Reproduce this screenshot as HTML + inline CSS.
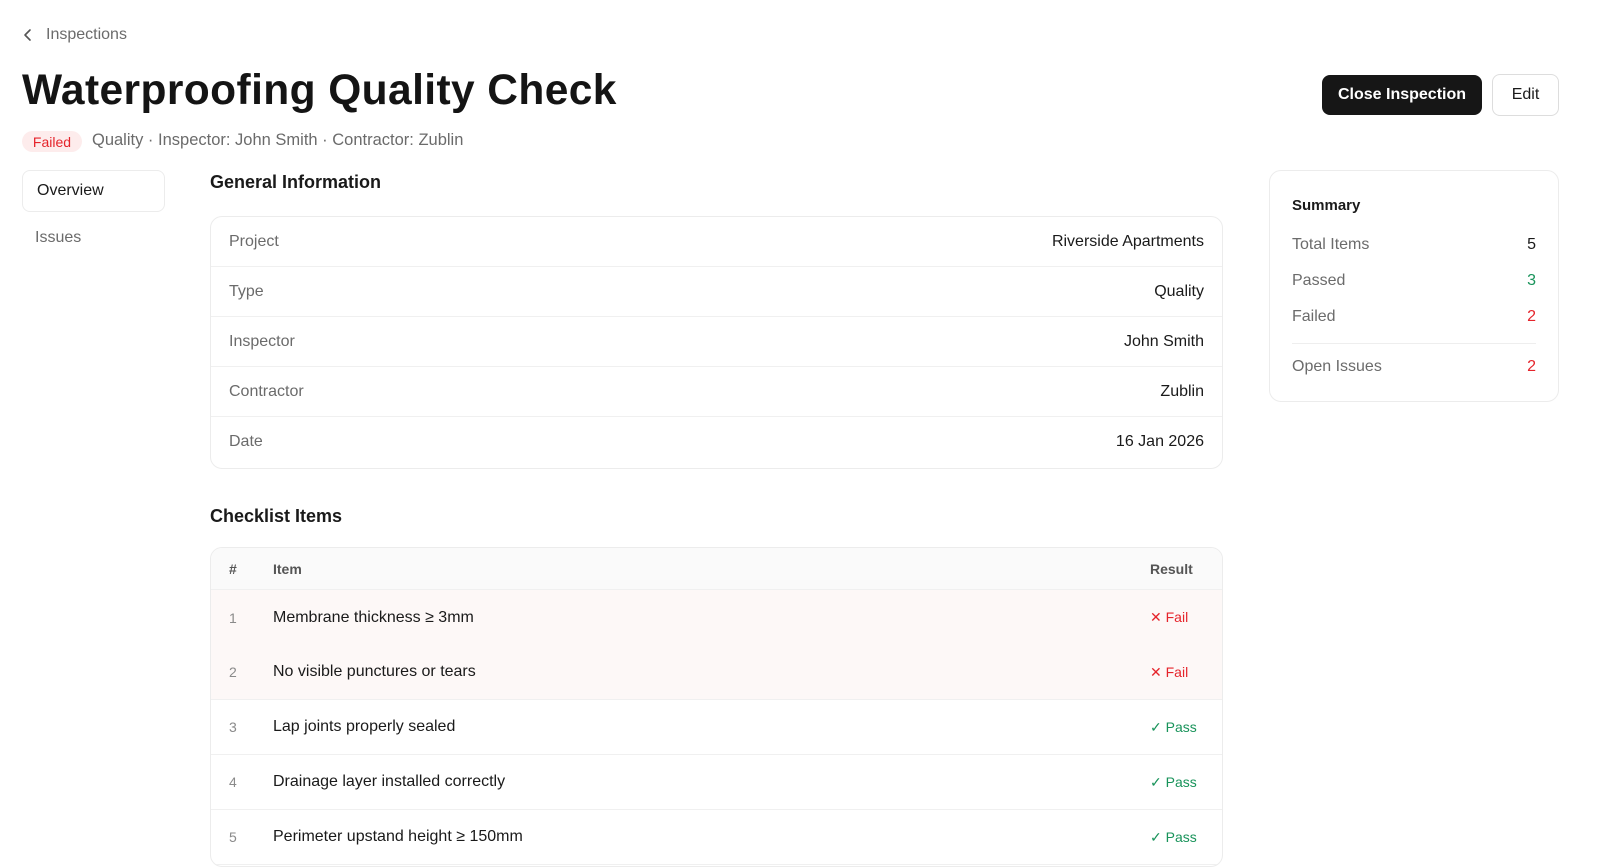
<!DOCTYPE html>
<html><head><style>
*{box-sizing:border-box;margin:0;padding:0}
body{width:1606px;height:851px;overflow:hidden;background:#fff;font-family:"Liberation Sans",sans-serif;color:#1a1a1a;position:relative}
.a{position:absolute}
.muted{color:#6b6b6b}
.card{border:1px solid #ececec;border-radius:12px}
.row{display:flex;justify-content:space-between;align-items:center;height:50px;padding:0 18px;border-bottom:1px solid #f0f0f0;font-size:16px}
.row:last-child{border-bottom:none}
.row span:first-child{color:#6b6b6b}
.tr{display:flex;align-items:center;height:55px;border-bottom:1px solid #f0f0f0;font-size:16px}
.tr .n{width:62px;padding-left:18px;color:#8a8a8a;font-size:14px}
.tr .i{flex:1}
.tr .r{width:72px;font-size:14px;white-space:nowrap}
.fail{color:#e5242b}.pass{color:#18935a}
.srow{display:flex;justify-content:space-between;font-size:16px;height:36px;align-items:center}
</style></head><body>
<div class="a muted" style="left:22px;top:26px;font-size:16px;display:flex;align-items:center;gap:12px">
<svg width="12" height="14" viewBox="0 0 12 14"><path d="M8 2 L3 7 L8 12" fill="none" stroke="#555" stroke-width="1.6" stroke-linecap="round" stroke-linejoin="round"/></svg>Inspections</div>
<div class="a" style="left:22px;top:67px;font-size:42.5px;font-weight:bold;letter-spacing:0.4px;color:#141414">Waterproofing Quality Check</div>
<div class="a" style="left:1322px;top:75px;width:160px;height:40px;background:#161616;color:#fff;border-radius:8px;font-size:16px;font-weight:bold;display:flex;align-items:center;justify-content:center">Close Inspection</div>
<div class="a" style="left:1492px;top:74px;width:67px;height:42px;border:1px solid #ddd;border-radius:8px;font-size:16px;display:flex;align-items:center;justify-content:center">Edit</div>
<div class="a" style="left:22px;top:131px;width:60px;height:21px;background:#fdecec;color:#e5242b;border-radius:11px;font-size:14px;display:flex;align-items:center;justify-content:center">Failed</div>
<div class="a muted" style="left:92px;top:131px;font-size:16.5px">Quality · Inspector: John Smith · Contractor: Zublin</div>
<div class="a card" style="left:22px;top:170px;width:143px;height:42px;border-radius:8px;font-size:16px;padding:11px 14px">Overview</div>
<div class="a muted" style="left:35px;top:229px;font-size:16px">Issues</div>
<div class="a" style="left:210px;top:172px;font-size:18px;font-weight:bold">General Information</div>
<div class="a card" style="left:210px;top:216px;width:1013px;height:253px">
<div class="row"><span>Project</span><span>Riverside Apartments</span></div>
<div class="row"><span>Type</span><span>Quality</span></div>
<div class="row"><span>Inspector</span><span>John Smith</span></div>
<div class="row"><span>Contractor</span><span>Zublin</span></div>
<div class="row"><span>Date</span><span>16 Jan 2026</span></div>
</div>
<div class="a" style="left:210px;top:506px;font-size:18px;font-weight:bold">Checklist Items</div>
<div class="a card" style="left:210px;top:547px;width:1013px;height:320px;overflow:hidden">
<div class="tr" style="height:42px;background:#fafafa;font-size:14px;color:#555;font-weight:bold"><span class="n" style="color:#555">#</span><span class="i">Item</span><span class="r">Result</span></div>
<div class="tr" style="background:#fdf8f7;border-bottom:none"><span class="n">1</span><span class="i">Membrane thickness ≥ 3mm</span><span class="r fail">✕ Fail</span></div>
<div class="tr" style="background:#fdf8f7"><span class="n">2</span><span class="i">No visible punctures or tears</span><span class="r fail">✕ Fail</span></div>
<div class="tr"><span class="n">3</span><span class="i">Lap joints properly sealed</span><span class="r pass">✓ Pass</span></div>
<div class="tr"><span class="n">4</span><span class="i">Drainage layer installed correctly</span><span class="r pass">✓ Pass</span></div>
<div class="tr"><span class="n">5</span><span class="i">Perimeter upstand height ≥ 150mm</span><span class="r pass">✓ Pass</span></div>
</div>
<div class="a card" style="left:1269px;top:170px;width:290px;height:232px;padding:26px 22px 22px">
<div style="font-size:15px;font-weight:bold;margin-bottom:13px">Summary</div>
<div class="srow"><span class="muted">Total Items</span><span>5</span></div>
<div class="srow"><span class="muted">Passed</span><span class="pass">3</span></div>
<div class="srow"><span class="muted">Failed</span><span class="fail">2</span></div>
<div style="border-top:1px solid #eee;margin:8px 0 5px"></div>
<div class="srow"><span class="muted">Open Issues</span><span class="fail">2</span></div>
</div>
</body></html>
